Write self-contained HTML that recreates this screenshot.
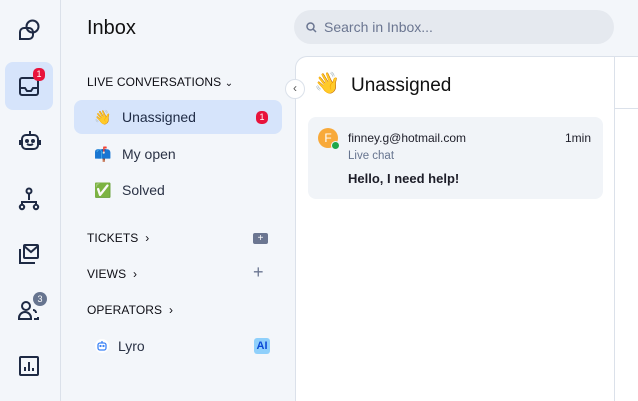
<!DOCTYPE html>
<html><head><meta charset="utf-8"><style>
*{box-sizing:border-box;margin:0;padding:0}
body{width:638px;height:401px;overflow:hidden;background:#f3f6fa;font-family:"Liberation Sans","Noto Sans CJK JP",sans-serif;color:#1d1d28;position:relative}
.rail{position:absolute;left:0;top:0;width:61px;height:401px;border-right:1px solid #dbe1ea}
.ic{position:absolute;left:18px}
.sel{position:absolute;left:5px;top:62px;width:48px;height:48px;border-radius:8px;background:#d6e4fb}
.badge{position:absolute;background:#e8133b;color:#fff;font-size:9px;border-radius:5px;text-align:center;line-height:12px;width:12px;height:13px}
.mid{position:absolute;left:62px;top:0;width:232px;height:401px}
h1{position:absolute;left:25px;top:17px;font-size:20px;font-weight:normal;color:#111}
.sec{position:absolute;left:25px;font-size:12px;color:#0d0d14;letter-spacing:.1px}
.item{position:absolute;left:12px;width:208px;height:34px;font-size:14px;color:#2a3245;line-height:34px;padding-left:20px}
.item span{display:inline-block;width:28px}
.main{position:absolute;left:295px;top:56px;width:320px;height:345px;background:#fff;border-top:1px solid #dbe1ea;border-left:1px solid #dbe1ea;border-right:1px solid #dbe1ea;border-top-left-radius:12px}
.right{position:absolute;left:615px;top:56px;width:23px;height:345px;background:#fff;border-top:1px solid #dbe1ea}
.search{position:absolute;left:294px;top:10px;width:320px;height:34px;border-radius:17px;background:#e5e9ef;color:#6b7691;font-size:14px;line-height:34px;padding-left:30px}
.card{position:absolute;left:12px;top:60px;width:295px;height:82px;background:#f1f4f8;border-radius:8px}
</style></head><body>
<div class="rail">
<svg class="ic" style="top:18px" width="24" height="24" viewBox="0 0 24 24" fill="none" stroke="#1e2a44" stroke-width="2"><circle cx="14.5" cy="8.5" r="6"/><path d="M2 21v-7a4 4 0 0 1 4-4h5a4 4 0 0 1 4 4v3a4 4 0 0 1-4 4z"/></svg>
<div class="sel"></div>
<svg class="ic" style="top:76px" width="22" height="22" viewBox="0 0 22 22" fill="none" stroke="#1e2a44" stroke-width="2"><rect x="2" y="2" width="18" height="17" rx="2"/><path d="M2 12h5l2 3h4l2-3h5"/></svg>
<div class="badge" style="left:33px;top:68px">1</div>
<svg class="ic" style="top:130px" width="24" height="22" viewBox="0 0 24 22" fill="none" stroke="#1e2a44" stroke-width="2"><rect x="4" y="5" width="16" height="14" rx="4"/><path d="M12 1v4M2 10v5M22 10v5"/><circle cx="9" cy="11" r="1" fill="#1e2a44"/><circle cx="15" cy="11" r="1" fill="#1e2a44"/><path d="M9 14q3 2 6 0"/></svg>
<svg class="ic" style="top:187px" width="22" height="24" viewBox="0 0 22 24" fill="none" stroke="#1e2a44" stroke-width="2"><circle cx="11" cy="4" r="2.5"/><path d="M11 7v6M4 18v-3h14v3"/><circle cx="4" cy="20" r="2.2"/><circle cx="18" cy="20" r="2.2"/></svg>
<svg class="ic" style="top:243px" width="22" height="22" viewBox="0 0 22 22" fill="none" stroke="#1e2a44" stroke-width="2"><rect x="6" y="2" width="14" height="13" rx="1"/><path d="M6 3l7 6 7-6M2 6v14h15"/></svg>
<svg class="ic" style="top:299px" width="22" height="22" viewBox="0 0 22 22" fill="none" stroke="#1e2a44" stroke-width="2"><circle cx="8" cy="7" r="4"/><path d="M1 20v-1a6 6 0 0 1 12 0v1zM15 11a3 3 0 0 1 3 3M16 20h4v-2"/></svg>
<div class="badge" style="left:33px;top:292px;background:#66748f;width:14px;height:14px;border-radius:7px;line-height:14px">3</div>
<svg class="ic" style="top:355px" width="22" height="22" viewBox="0 0 22 22" fill="none" stroke="#1e2a44" stroke-width="2"><rect x="2" y="2" width="18" height="18" rx="1"/><path d="M7 16v-4M11 16V7M15 16v-3"/></svg>
</div>
<div class="mid">
<h1>Inbox</h1>
<div class="sec" style="top:75px">LIVE CONVERSATIONS <span style="font-size:10px">&#8964;</span></div>
<div class="item" style="top:100px;background:#d6e4fb;border-radius:8px;color:#1e2a44"><span>👋</span>Unassigned<div class="badge" style="left:182px;top:11px">1</div></div>
<div class="item" style="top:137px"><span>📫</span>My open</div>
<div class="item" style="top:173px"><span>✅</span>Solved</div>
<div class="sec" style="top:231px">TICKETS &nbsp;›</div>
<div style="position:absolute;left:191px;top:233px;width:15px;height:11px;background:#6b7691;border-radius:2px;color:#fff;font-size:10px;line-height:11px;text-align:center">+</div>
<div class="sec" style="top:267px">VIEWS &nbsp;›</div>
<div style="position:absolute;left:191px;top:262px;font-size:18px;color:#6b7691">+</div>
<div class="sec" style="top:303px">OPERATORS &nbsp;›</div>
<div style="position:absolute;left:33px;top:339px;width:14px;height:14px;border-radius:7px;background:#fff"><svg width="14" height="14" viewBox="0 0 14 14" fill="none" stroke="#3b82f6" stroke-width="1.3"><rect x="3" y="4" width="8" height="7" rx="2"/><path d="M7 2v2"/><circle cx="5.5" cy="7" r=".5" fill="#3b82f6"/><circle cx="8.5" cy="7" r=".5" fill="#3b82f6"/></svg></div>
<div style="position:absolute;left:56px;top:338px;font-size:14px;color:#2a3245">Lyro</div>
<div style="position:absolute;left:192px;top:338px;width:16px;height:16px;border-radius:3px;background:#8fd0fb;color:#0a4ad6;font-size:11px;font-weight:bold;text-align:center;line-height:16px">AI</div>
</div>
<div class="search"><svg style="position:absolute;left:12px;top:12px" width="11" height="11" viewBox="0 0 11 11" fill="none" stroke="#6b7691" stroke-width="1.5"><circle cx="4.5" cy="4.5" r="3.5"/><path d="M7 7l3 3"/></svg>Search in Inbox...</div>
<div class="right"><div style="position:absolute;top:51px;left:0;width:23px;border-top:1px solid #dbe1ea"></div></div>
<div class="main">
<div style="position:absolute;left:18px;top:15px;font-size:21px">👋</div>
<div style="position:absolute;left:55px;top:18px;font-size:19px;color:#111">Unassigned</div>
<div class="card">
<div style="position:absolute;left:10px;top:11px;width:20px;height:20px;border-radius:10px;background:#f8a93a;color:#fff;font-size:12px;text-align:center;line-height:20px">F</div>
<div style="position:absolute;left:23px;top:24px;width:9px;height:9px;border-radius:5px;background:#1fa74a;border:1.5px solid #f1f4f8"></div>
<div style="position:absolute;left:40px;top:14px;font-size:12px;color:#1d1d28">finney.g@hotmail.com</div>
<div style="position:absolute;right:12px;top:14px;font-size:12px">1min</div>
<div style="position:absolute;left:40px;top:33px;font-size:11.5px;color:#66748f">Live chat</div>
<div style="position:absolute;left:40px;top:54px;font-size:13px;font-weight:bold">Hello, I need help!</div>
</div>
</div>
<div style="position:absolute;left:285px;top:79px;width:20px;height:20px;border-radius:10px;background:#fff;border:1px solid #dbe1ea;color:#555;font-size:12px;text-align:center;line-height:17px">‹</div>
</body></html>
